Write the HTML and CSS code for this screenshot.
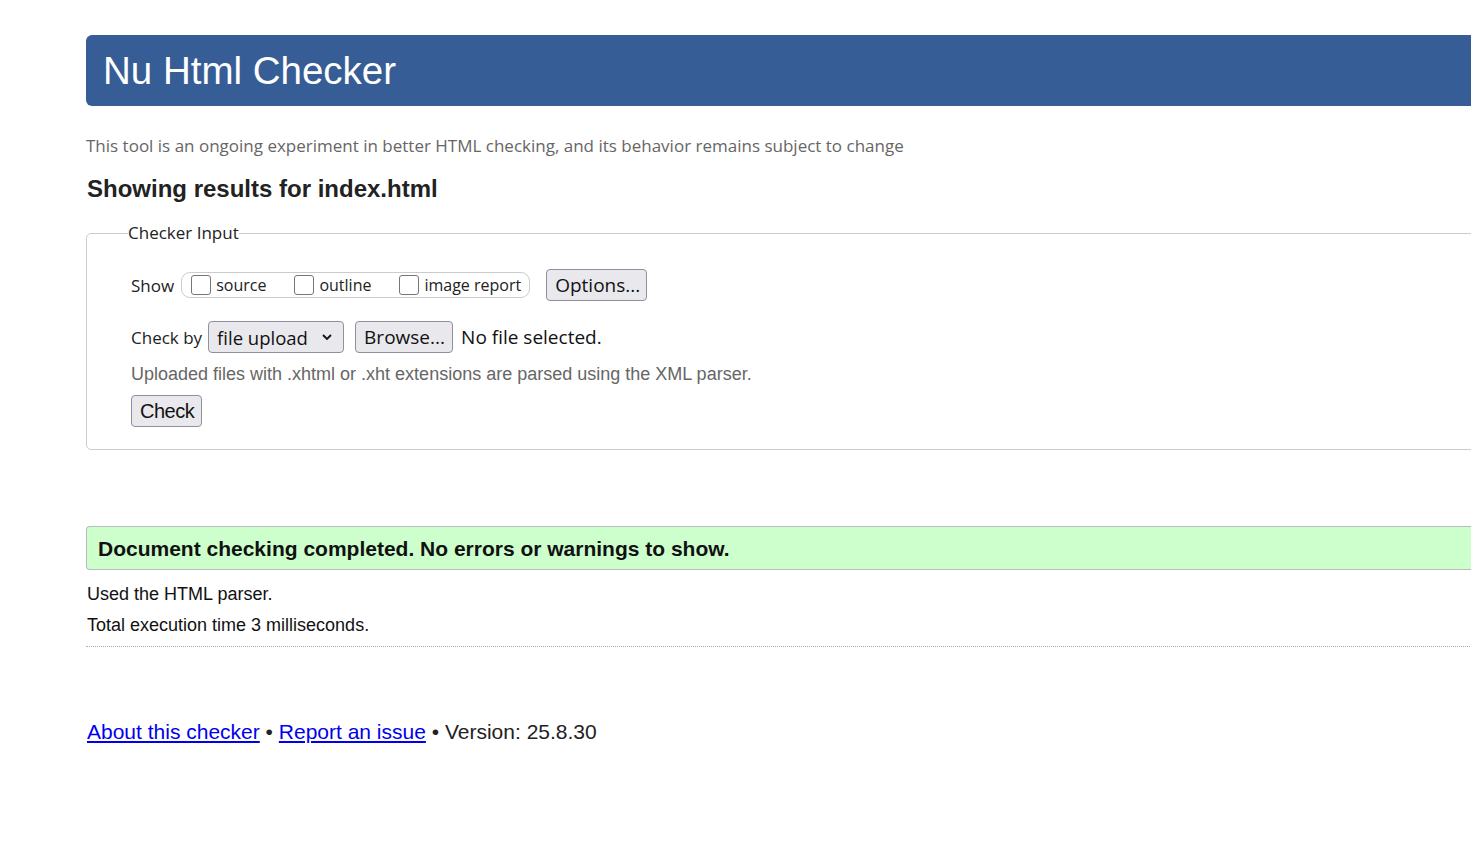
FILE: index.html
```html
<!DOCTYPE html>
<html>
<head>
<meta charset="utf-8">
<title>Nu Html Checker</title>
<link rel="stylesheet" href="styles.css">
</head>
<body>
<div class="page">
  <h1 class="banner">Nu Html Checker</h1>
  <p class="intro">This tool is an ongoing experiment in better HTML checking, and its behavior remains subject to change</p>
  <h2 class="showing">Showing results for index.html</h2>
  <fieldset class="input">
    <legend>Checker Input</legend>
    <div class="row show-row">
      <span class="lbl">Show</span>
      <span class="group">
        <label class="opt"><span class="box"></span>source</label>
        <label class="opt"><span class="box"></span>outline</label>
        <label class="opt"><span class="box"></span>image report</label>
      </span>
      <button class="btn opts">Options...</button>
    </div>
    <div class="row by-row">
      <span class="lbl">Check by</span>
      <span class="btn select">file upload
        <svg class="chev" width="12" height="8" viewBox="0 0 12 8"><path d="M2 2 L6 6 L10 2" fill="none" stroke="#111" stroke-width="1.8"/></svg>
      </span>
      <button class="btn browse">Browse...</button>
      <span class="nofile">No file selected.</span>
    </div>
    <p class="note">Uploaded files with .xhtml or .xht extensions are parsed using the XML parser.</p>
    <button class="btn check">Check</button>
  </fieldset>
  <div class="success">Document checking completed. No errors or warnings to show.</div>
  <p class="detail">Used the HTML parser.</p>
  <p class="detail second">Total execution time 3 milliseconds.</p>
  <hr class="sep">
  <p class="footer"><a href="#">About this checker</a> • <a href="#">Report an issue</a> • Version: 25.8.30</p>
</div>
</body>
</html>
```
FILE: styles.css
```css
html, body {
  margin: 0;
  padding: 0;
  overflow: hidden;
  background: #fff;
}
body {
  font-family: "Liberation Sans", Arial, sans-serif;
  color: #222;
}
.page {
  margin-left: 86px;
  width: 1500px;
  padding-top: 35px;
}
.banner {
  margin: 0;
  height: 71px;
  box-sizing: border-box;
  background: #365d95;
  color: #fff;
  font-family: "Liberation Sans", Arial, sans-serif;
  font-weight: normal;
  font-size: 38.5px;
  line-height: 71px;
  padding-left: 17px;
  border-radius: 6px 0 0 6px;
}
.intro {
  margin: 28px 0 0 0;
  font-family: "Open Sans", sans-serif;
  font-size: 17px;
  line-height: 24px;
  color: #666;
}
.showing {
  margin: 17px 0 0 1px;
  font-family: "Liberation Sans", Arial, sans-serif;
  font-size: 24px;
  line-height: 28px;
  font-weight: bold;
  color: #222;
}
.input {
  margin: 19px 0 0 0;
  border: 1px solid #ccc;
  border-radius: 5px;
  padding: 25px 0 22px 44px;
  min-height: 0;
}
.input legend {
  font-family: "Open Sans", sans-serif;
  font-size: 17px;
  color: #222;
  padding: 0;
  margin-left: -3px;
  line-height: 22px;
}
.row {
  display: flex;
  align-items: center;
}
.show-row {
  height: 32px;
}
.lbl {
  font-family: "Open Sans", sans-serif;
  font-size: 17px;
  color: #222;
  margin-right: 7px;
}
.group {
  display: flex;
  align-items: center;
  height: 26px;
  border: 1px solid #ccc;
  border-radius: 9px;
  padding: 0 8px 0 9px;
  box-sizing: border-box;
}
.opt {
  display: flex;
  align-items: center;
  font-family: "Open Sans", sans-serif;
  font-size: 16px;
  color: #222;
  margin-right: 28px;
}
.opt:last-child {
  margin-right: 0;
}
.box {
  display: inline-block;
  width: 20px;
  height: 20px;
  box-sizing: border-box;
  border: 1px solid #767676;
  border-radius: 3px;
  margin-right: 5px;
  background: #fff;
}
.btn {
  display: inline-flex;
  align-items: center;
  box-sizing: border-box;
  height: 32px;
  background: #e9e9ed;
  border: 1px solid #8f8f9d;
  border-radius: 4px;
  font-family: "Open Sans", sans-serif;
  font-size: 19px;
  color: #111;
  padding: 0 8px;
  margin: 0;
  white-space: nowrap;
}
.opts {
  margin-left: 16px;
  width: 101px;
}
.by-row {
  margin-top: 20px;
  height: 32px;
}
.by-row .lbl {
  margin-right: 6px;
}
.select {
  width: 136px;
  padding-left: 8px;
  font-size: 18.5px;
}
.chev {
  margin-left: auto;
  margin-right: 2px;
}
.browse {
  margin-left: 11px;
  width: 98px;
}
.nofile {
  font-family: "Open Sans", sans-serif;
  font-size: 19px;
  color: #111;
  margin-left: 8px;
}
.note {
  margin: 9px 0 0 0;
  font-family: "Liberation Sans", Arial, sans-serif;
  font-size: 18px;
  line-height: 24px;
  color: #666;
}
.check {
  margin-top: 9px;
  width: 71px;
  font-family: "Liberation Sans", Arial, sans-serif;
  font-size: 20px;
  letter-spacing: -0.5px;
}
.success {
  margin-top: 76px;
  height: 44px;
  box-sizing: border-box;
  background: #ccffcc;
  border: 1px solid #bbb;
  border-right: none;
  border-radius: 4px 0 0 4px;
  padding-left: 11px;
  font-family: "Liberation Sans", Arial, sans-serif;
  font-weight: bold;
  font-size: 21px;
  line-height: 43px;
  color: #111;
}
.detail {
  margin: 13px 0 0 1px;
  font-size: 18px;
  line-height: 22px;
  color: #111;
}
.detail.second {
  margin-top: 9px;
}
.sep {
  margin: 10px 0 0 0;
  border: none;
  border-top: 1px dotted #aaa;
  height: 0;
}
.footer {
  margin: 72px 0 0 1px;
  font-size: 21px;
  line-height: 26px;
  color: #222;
}
.footer a {
  color: #0000ee;
  text-decoration: underline;
}
```
